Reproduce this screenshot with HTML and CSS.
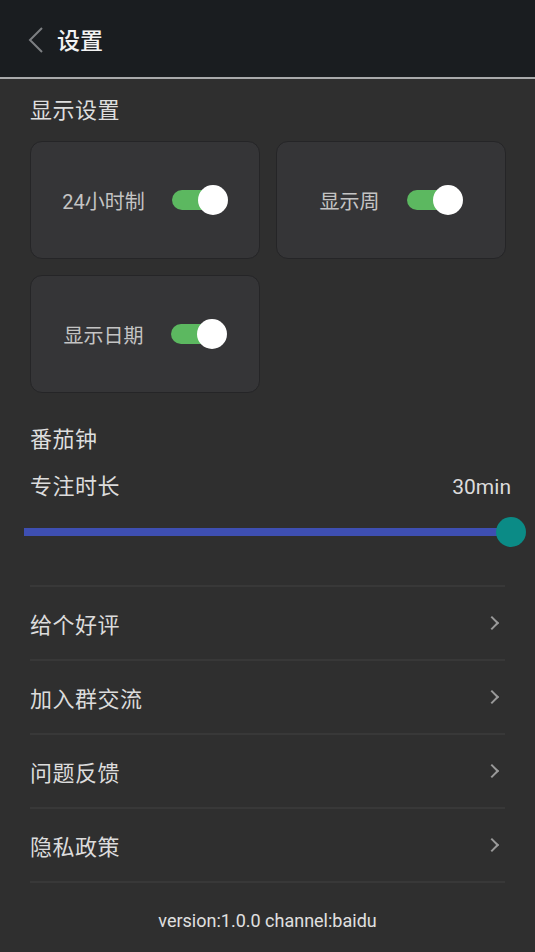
FILE: index.html
```html
<!DOCTYPE html>
<html lang="zh">

<head>
  <meta charset="UTF-8" />
  <title>设置</title>
  <link rel="stylesheet" href="styles.css">
</head>

<body>

  <header class="topbar">
    <svg class="back" width="16" height="26" viewBox="0 0 16 26">
      <path d="M14 1 L2 13 L14 25" fill="none" stroke="#7d7f82" stroke-width="2" />
    </svg>
    <h1>设置</h1>
  </header>

  <main class="page">
    <h2 class="section-title">显示设置</h2>

    <div class="cards">
      <div class="card">
        <span class="card-label">24小时制</span>
        <span class="switch"><span class="knob"></span></span>
      </div>
      <div class="card">
        <span class="card-label">显示周</span>
        <span class="switch"><span class="knob"></span></span>
      </div>
      <div class="card">
        <span class="card-label">显示日期</span>
        <span class="switch"><span class="knob"></span></span>
      </div>
    </div>

    <h2 class="section-title tomato">番茄钟</h2>
    <div class="focus-row">
      <span>专注时长</span>
      <span class="value">30min</span>
    </div>
    <div class="slider">
      <div class="track"></div>
      <div class="thumb"></div>
    </div>

    <ul class="menu">
      <li>给个好评 <span class="chev"></span></li>
      <li>加入群交流 <span class="chev"></span></li>
      <li>问题反馈 <span class="chev"></span></li>
      <li>隐私政策 <span class="chev"></span></li>
    </ul>

    <p class="version">version:1.0.0 channel:baidu</p>
  </main>

</body>

</html>
```

FILE: styles.css
```css
body {
  margin: 0;
  background: #2f2f2f;
  font-family: Roboto, "Noto Sans CJK SC", sans-serif;
  color: #dcdcdc;
  width: 535px;
  height: 952px;
  overflow: hidden;
}

.topbar {
  height: 77px;
  background: #1a1d20;
  border-bottom: 2px solid #a9aaab;
  display: flex;
  align-items: center;
  padding-left: 28px;
}

.back {
  margin-right: 13px;
  margin-top: 2px;
}

.topbar h1 {
  margin: 0;
  font-size: 23px;
  font-weight: 500;
  color: #f2f2f2;
}

.page {
  padding: 0 30px;
}

.section-title {
  margin: 0;
  font-size: 22px;
  letter-spacing: 0.5px;
  font-weight: normal;
  color: #dedede;
  line-height: 28px;
  padding-top: 18px;
}

.cards {
  display: grid;
  grid-template-columns: 230px 230px;
  gap: 16px;
  margin-top: 16px;
}

.card {
  height: 116px;
  background: #353537;
  border: 1px solid #252527;
  border-radius: 12px;
  display: flex;
  align-items: center;
  justify-content: center;
  gap: 27px;
}

.card-label {
  font-size: 20px;
  color: #c4c4c4;
}

.switch {
  position: relative;
  width: 56px;
  height: 20px;
}

.switch::before {
  content: "";
  position: absolute;
  left: 0;
  top: 0;
  width: 48px;
  height: 20px;
  border-radius: 10px;
  background: #5cb860;
}

.knob {
  position: absolute;
  right: 0;
  top: -5px;
  width: 30px;
  height: 30px;
  border-radius: 50%;
  background: #ffffff;
}

.tomato {
  padding-top: 33px;
}

.focus-row {
  display: flex;
  justify-content: space-between;
  font-size: 22px;
  letter-spacing: 0.5px;
  line-height: 28px;
  margin-top: 19px;
  margin-right: -6px;
}

.focus-row .value {
  font-size: 21px;
  letter-spacing: 0;
}

.slider {
  position: relative;
  height: 30px;
  margin: 16px -21px 0 -6px;
  display: flex;
  align-items: center;
}

.track {
  flex: 1;
  height: 8px;
  background: #3e4fb2;
}

.thumb {
  width: 30px;
  height: 30px;
  border-radius: 50%;
  background: #0b8b86;
  margin-left: -15px;
}

.menu {
  list-style: none;
  margin: 38px 0 0;
  padding: 0;
  border-top: 2px solid #383838;
}

.menu li {
  height: 72px;
  border-bottom: 2px solid #383838;
  display: flex;
  align-items: center;
  justify-content: space-between;
  font-size: 22px;
  letter-spacing: 0.5px;
  color: #dcdcdc;
}

.chev {
  width: 8px;
  height: 8px;
  border-top: 2px solid #9a9a9a;
  border-right: 2px solid #9a9a9a;
  transform: rotate(45deg);
  margin-right: 8px;
}

.version {
  margin: 27px 0 0;
  text-align: center;
  font-size: 18px;
  color: #e0e0e0;
}
```
